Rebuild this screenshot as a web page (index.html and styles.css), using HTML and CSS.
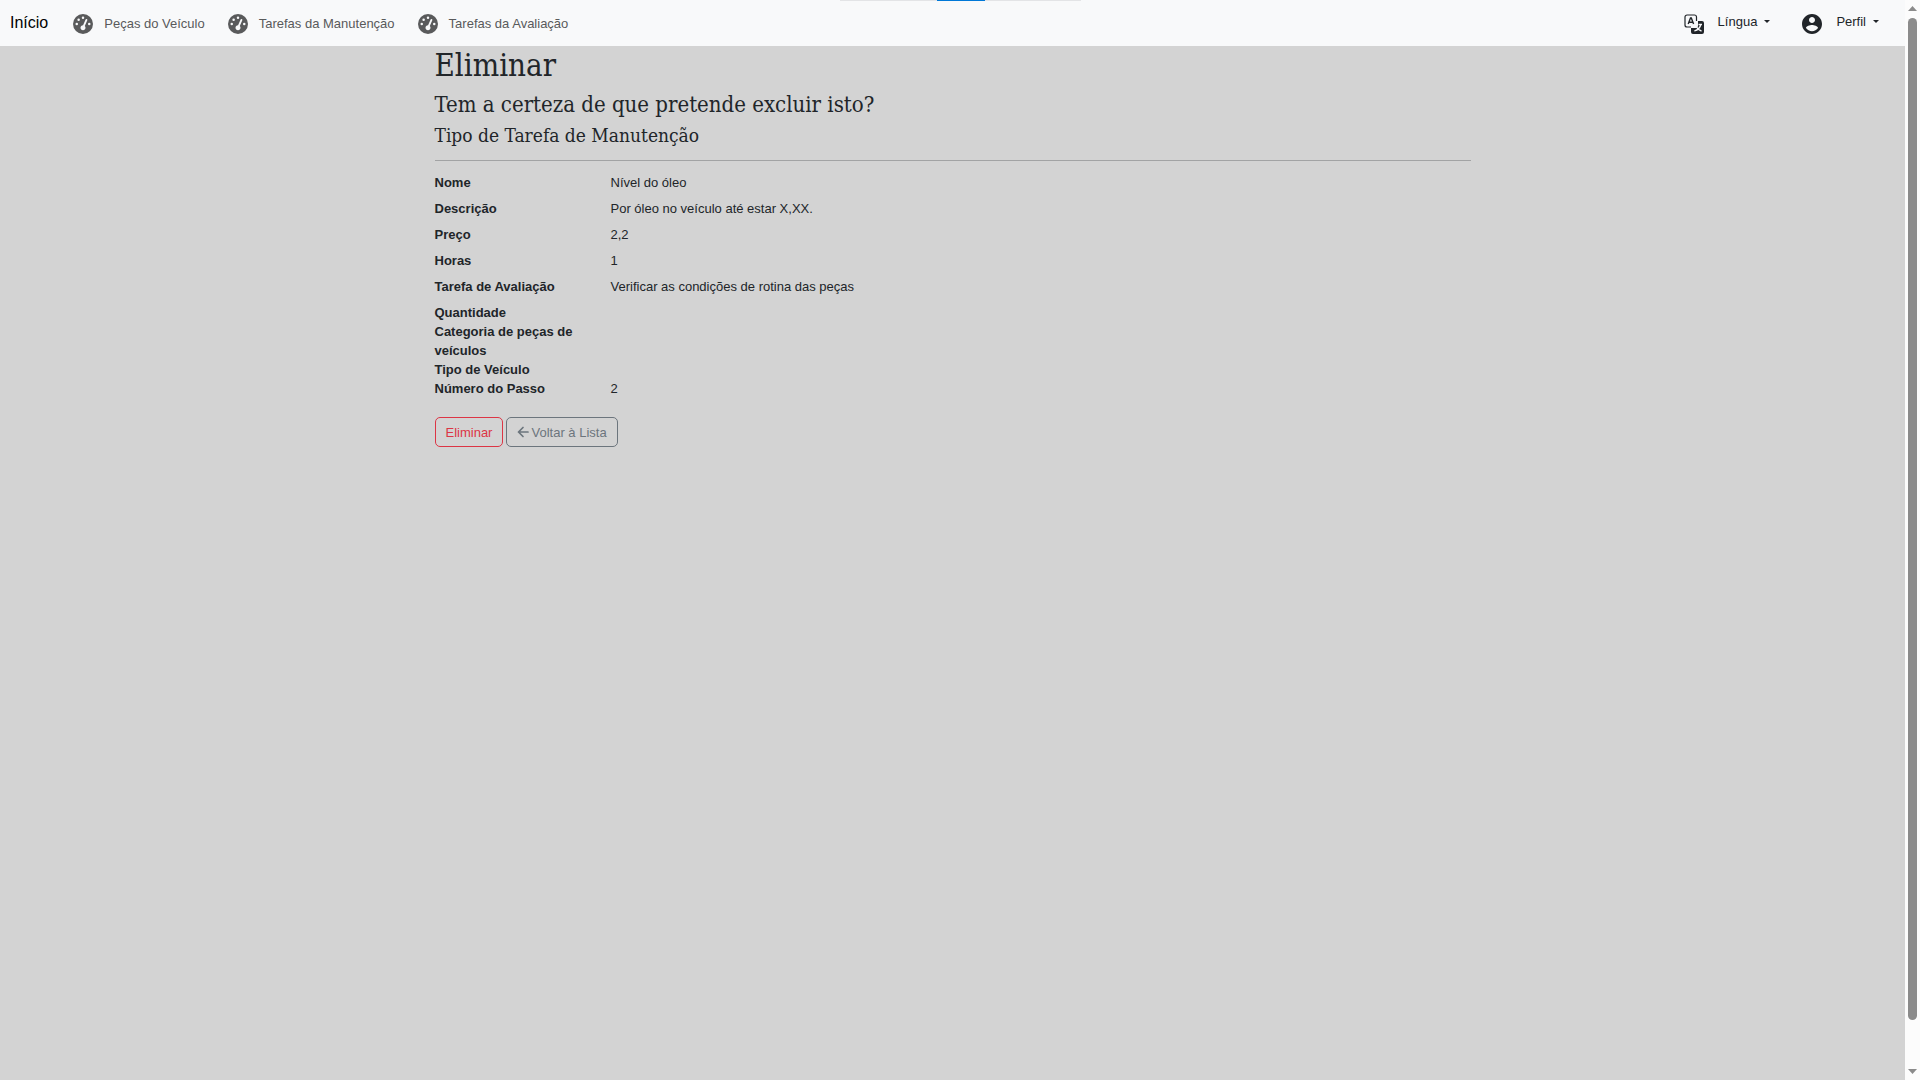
FILE: index.html
```html
<!DOCTYPE html>
<html lang="pt">
<head>
<meta charset="utf-8">
<title>Eliminar</title>
<link rel="stylesheet" href="styles.css">
</head>
<body>
<svg class="defs" aria-hidden="true">
  <symbol id="gauge" viewBox="0 0 512 512"><path fill-rule="evenodd" d="M0 256a256 256 0 1 1 512 0A256 256 0 1 1 0 256zM288 96a32 32 0 1 0 -64 0 32 32 0 1 0 64 0zM256 416c35.3 0 64-28.7 64-64c0-17.4-6.9-33.1-18.1-44.6L366 161.7c5.3-12.1-.2-26.3-12.3-31.6s-26.3 .2-31.6 12.3L257.9 288c-.6 0-1.3 0-1.9 0c-35.3 0-64 28.7-64 64s28.7 64 64 64zM176 144a32 32 0 1 0 -64 0 32 32 0 1 0 64 0zM96 288a32 32 0 1 0 0-64 32 32 0 1 0 0 64zm352-32a32 32 0 1 0 -64 0 32 32 0 1 0 64 0z"/></symbol>
</svg>
<div class="page">
  <header class="navbar">
    <a class="brand" href="#">Início</a>
    <nav class="links">
      <a class="link" href="#"><svg class="icon"><use href="#gauge"/></svg>Peças do Veículo</a>
      <a class="link" href="#"><svg class="icon"><use href="#gauge"/></svg>Tarefas da Manutenção</a>
      <a class="link" href="#"><svg class="icon"><use href="#gauge"/></svg>Tarefas da Avaliação</a>
    </nav>
    <div class="menus">
      <button class="menu" type="button">
        <svg class="icon" viewBox="0 0 20 20"><path d="M12.500 7V3a2 2 0 0 0-2-2H3a2 2 0 0 0-2 2v8a2 2 0 0 0 2 2h4" fill="none" stroke="currentColor" stroke-width="1.200"/><path d="M4.200 10 6.500 4h.8l2.300 6M5 8.200h4" fill="none" stroke="currentColor" stroke-width="1.400"/><path d="M14 7h4a2 2 0 0 1 2 2v9a2 2 0 0 1-2 2H9a2 2 0 0 1-2-2v-4h5a2 2 0 0 0 2-2z"/><path d="M14.500 10.500h3.500M16.800 10.500c-.6 3-3 5.500-6.500 6.500M12.500 13c1.200 2.200 3 3.500 5 4" fill="none" stroke="#f8f9fa" stroke-width="1.300"/></svg>
        <span>Língua</span><span class="caret"></span>
      </button>
      <button class="menu" type="button">
        <svg class="icon" viewBox="2 2 20 20"><path d="M12 2C6.480 2 2 6.480 2 12s4.480 10 10 10 10-4.480 10-10S17.520 2 12 2zm0 3c1.660 0 3 1.340 3 3s-1.340 3-3 3-3-1.340-3-3 1.340-3 3-3zm0 14.200c-2.500 0-4.710-1.280-6-3.220.03-1.990 4-3.080 6-3.080 1.990 0 5.970 1.090 6 3.080-1.290 1.940-3.500 3.220-6 3.220z"/></svg>
        <span>Perfil</span><span class="caret"></span>
      </button>
    </div>
  </header>
  <main class="container">
    <h1>Eliminar</h1>
    <h2>Tem a certeza de que pretende excluir isto?</h2>
    <h3>Tipo de Tarefa de Manutenção</h3>
    <hr>
    <dl class="details">
      <div class="row spaced"><dt>Nome</dt><dd>Nível do óleo</dd></div>
      <div class="row spaced"><dt>Descrição</dt><dd>Por óleo no veículo até estar X,XX.</dd></div>
      <div class="row spaced"><dt>Preço</dt><dd>2,2</dd></div>
      <div class="row spaced"><dt>Horas</dt><dd>1</dd></div>
      <div class="row spaced"><dt>Tarefa de Avaliação</dt><dd>Verificar as condições de rotina das peças</dd></div>
      <div class="row"><dt>Quantidade</dt><dd></dd></div>
      <div class="row"><dt>Categoria de peças de veículos</dt><dd></dd></div>
      <div class="row"><dt>Tipo de Veículo</dt><dd></dd></div>
      <div class="row"><dt>Número do Passo</dt><dd>2</dd></div>
    </dl>
    <form class="actions">
      <button class="btn danger" type="button">Eliminar</button>
      <a class="btn secondary" href="#"><svg class="arrow" viewBox="0 0 12 12"><path d="M6 1.500 1.500 6 6 10.500M1.500 6H11" fill="none" stroke="currentColor" stroke-width="1.700" stroke-linecap="round" stroke-linejoin="round"/></svg>Voltar à Lista</a>
    </form>
  </main>
</div>
<div class="scrollbar" aria-hidden="true">
  <svg class="scroll-arrow" viewBox="0 0 9 5"><path d="M4.500 0 9 5H0z"/></svg>
  <div class="track"><div class="thumb"></div></div>
  <svg class="scroll-arrow" viewBox="0 0 9 5"><path d="M0 0h9L4.500 5z"/></svg>
</div>
<div class="handle" aria-hidden="true"></div>
</body>
</html>
```
FILE: styles.css
```css
* { box-sizing: border-box; }
body {
  margin: 0;
  display: flex;
  min-height: 100vh;
  background: #d3d3d3;
  color: #212529;
  font: 13px/19px "Liberation Sans", Arial, sans-serif;
}
.defs { position: absolute; width: 0; height: 0; }
.page { flex: 1; min-width: 0; }
a { color: inherit; text-decoration: none; }
button { font: inherit; color: inherit; cursor: pointer; }

.navbar {
  display: flex;
  align-items: center;
  height: 46px;
  padding: 0 26px 0 10px;
  background: #f8f9fa;
}
.brand { color: #000; font-size: 16px; line-height: 24px; }
.links { display: flex; gap: 23px; margin-left: 25px; padding-top: 2px; }
.link { display: flex; align-items: flex-start; gap: 11px; color: #595a5b; }
.icon { width: 20px; height: 20px; fill: currentColor; }
.menus { display: flex; gap: 32px; margin-left: auto; }
.menu {
  display: flex;
  align-items: flex-start;
  padding: 0;
  border: 0;
  background: none;
}
.menu .icon { margin: 2px 14px 0 0; }
.caret {
  margin: 8px 0 0 7px;
  border: 3px solid transparent;
  border-top-color: currentColor;
  border-bottom: 0;
}

.container { max-width: 1056px; margin: 0 auto; padding: 0 10px; }
h1, h2, h3 {
  margin: 0 0 6px;
  font-family: "Roboto Slab", "DejaVu Serif Condensed", "DejaVu Serif", serif;
  font-weight: 300;
}
h1 { font-size: 31px; line-height: 39px; }
h2 { font-size: 22px; line-height: 27px; }
h3 { font-size: 19px; line-height: 23px; }
hr { margin: 13px 0 12px; border: 0; border-top: 1px solid #a2a3a4; }

.details { margin: 0 -10px; }
.row { display: grid; grid-template-columns: 1fr 5fr; }
.spaced { margin-bottom: 7px; }
dt, dd { margin: 0; padding: 0 10px; }
dt { font-weight: bold; }

.actions { display: flex; gap: 3px; margin-top: 19px; }
.btn {
  display: flex;
  align-items: center;
  gap: 2px;
  height: 30px;
  padding: 0 10px;
  border: 1px solid currentColor;
  border-radius: 5px;
  background: none;
}
.danger { color: #dc3545; }
.secondary { color: #6c757d; }
.arrow { width: 12px; height: 12px; }

.scrollbar {
  position: sticky;
  top: 0;
  display: flex;
  flex-direction: column;
  align-items: center;
  gap: 7px;
  width: 15px;
  height: 100vh;
  padding: 6px 0;
  background: #fcfcfc;
}
.scroll-arrow { width: 9px; height: 5px; fill: #8b8b8b; }
.track { flex: 1; }
.thumb { width: 9px; height: 96%; border-radius: 5px; background: #8b8b8b; }
.handle {
  position: absolute;
  top: 0;
  left: 50%;
  width: 241px;
  height: 1px;
  margin-left: -120px;
  background: linear-gradient(#0078d7, #0078d7) center / 48px 1px no-repeat #e3e4e6;
}
```
